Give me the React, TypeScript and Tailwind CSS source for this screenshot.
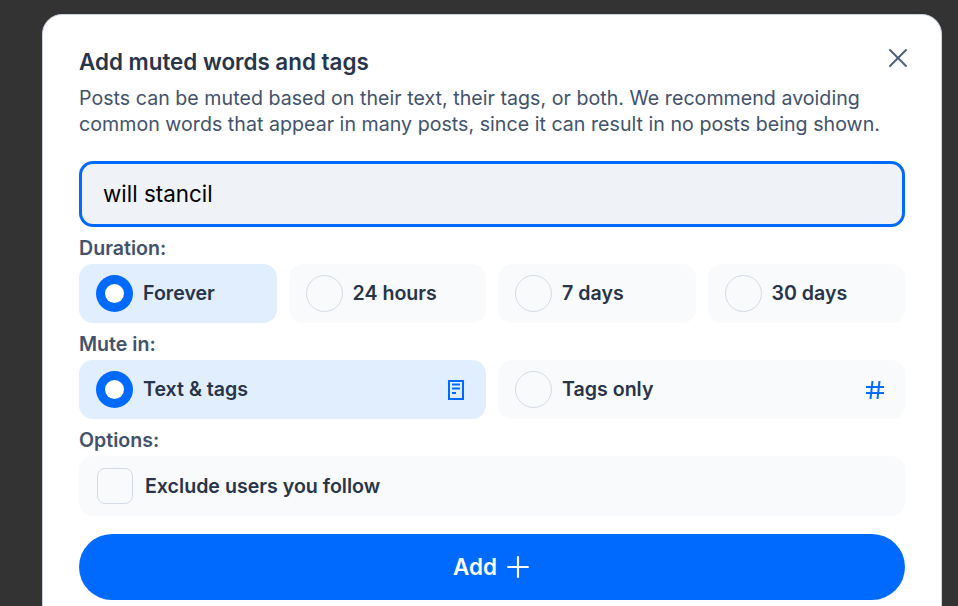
import { Plus, X } from "lucide-react";

const DURATIONS = [
  { label: "Forever", selected: true },
  { label: "24 hours", selected: false },
  { label: "7 days", selected: false },
  { label: "30 days", selected: false },
];

function Radio({ selected }: { selected: boolean }) {
  if (selected) {
    return (
      <span className="flex h-[37px] w-[37px] shrink-0 items-center justify-center rounded-full bg-[#006aff]">
        <span className="h-[19px] w-[19px] rounded-full bg-white" />
      </span>
    );
  }
  return <span className="h-[37px] w-[37px] shrink-0 rounded-full border border-[#d4dbe5] bg-[#f9fafb]" />;
}

function Label({ children }: { children: string }) {
  return <div className="h-[37px] pt-[8px] text-[19.6px] leading-[26px] font-semibold text-[#42526b]">{children}</div>;
}

function TextIcon() {
  return (
    <svg className="mt-[1px]" width="16" height="20" viewBox="0 0 16 20" fill="none" stroke="#006aff" strokeWidth="2">
      <rect x="1" y="1" width="14" height="18" />
      <path d="M4 4.5h8M4 8.5h8M4 13h4" />
    </svg>
  );
}

function HashIcon() {
  return (
    <svg width="18" height="18" viewBox="0 0 18 18" fill="none" stroke="#006aff" strokeWidth="2">
      <path d="M0 6h18M0 12h18M6.5 0 4.5 18M13.5 0l-2 18" />
    </svg>
  );
}

export default function App() {
  return (
    <div className="h-[606px] overflow-hidden bg-[#333333] pt-[14px] pl-[42px] font-['Inter',sans-serif]">
      <div className="relative h-[700px] w-[900px] rounded-[20px] border border-[#c9d3e2] bg-white px-[36px] pt-[33px]">
        <button className="absolute top-[27px] right-[27px] text-[#4d5f7a]">
          <X size={32} strokeWidth={1.5} />
        </button>
        <h1 className="text-[22.4px] leading-[28px] font-semibold text-[#273449]">Add muted words and tags</h1>
        <p className="mt-[9px] text-[19.6px] leading-[26px] tracking-[0.03px] text-[#42526b]">
          Posts can be muted based on their text, their tags, or both. We recommend avoiding
          <br />
          common words that appear in many posts, since it can result in no posts being shown.
        </p>
        <div className="mt-[24px] flex h-[66px] items-center rounded-[14px] border-[3px] border-[#006aff] bg-[#eff2f6] pl-[21px] text-[22.4px] text-black">
          will stancil
        </div>
        <Label>Duration:</Label>
        <div className="grid grid-cols-4 gap-[12px]">
          {DURATIONS.map((d) => (
            <div
              key={d.label}
              className={`flex h-[59px] items-center gap-[10px] rounded-[14px] pl-[17px] ${d.selected ? "bg-[#e1eefe]" : "bg-[#f9fafb]"}`}
            >
              <Radio selected={d.selected} />
              <span className="text-[19.6px] font-semibold text-[#273449]">{d.label}</span>
            </div>
          ))}
        </div>
        <Label>Mute in:</Label>
        <div className="grid grid-cols-2 gap-[12px]">
          <div className="flex h-[59px] items-center gap-[10px] rounded-[14px] bg-[#e1eefe] pr-[22px] pl-[17px]">
            <Radio selected />
            <span className="flex-1 text-[19.6px] font-semibold text-[#273449]">Text &amp; tags</span>
            <TextIcon />
          </div>
          <div className="flex h-[59px] items-center gap-[10px] rounded-[14px] bg-[#f9fafb] pr-[21px] pl-[17px]">
            <Radio selected={false} />
            <span className="flex-1 text-[19.6px] font-semibold text-[#273449]">Tags only</span>
            <HashIcon />
          </div>
        </div>
        <Label>Options:</Label>
        <div className="flex h-[60px] items-center gap-[12px] rounded-[14px] bg-[#f9fafb] pl-[18px]">
          <span className="h-[36px] w-[36px] rounded-[8px] border border-[#d4dbe5]" />
          <span className="mt-[2px] text-[19.6px] font-semibold text-[#273449]">Exclude users you follow</span>
        </div>
        <button className="mt-[18px] flex h-[66px] w-full items-center justify-center gap-[4px] rounded-full bg-[#006aff] pl-[4px] text-[22.4px] font-semibold text-white">
          Add
          <Plus size={34} strokeWidth={1.5} />
        </button>
      </div>
    </div>
  );
}
